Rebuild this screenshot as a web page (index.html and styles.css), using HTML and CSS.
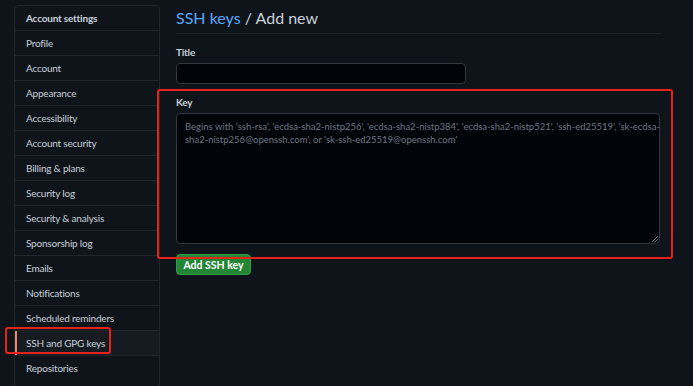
FILE: index.html
```html
<!DOCTYPE html>
<html>
<head>
<meta charset="utf-8">
<link rel="stylesheet" href="styles.css">
</head>
<body>
<div class="page">
  <nav class="sidebar">
    <div class="nav-head">Account settings</div>
    <div class="nav-item">Profile</div>
    <div class="nav-item">Account</div>
    <div class="nav-item">Appearance</div>
    <div class="nav-item">Accessibility</div>
    <div class="nav-item">Account security</div>
    <div class="nav-item">Billing &amp; plans</div>
    <div class="nav-item">Security log</div>
    <div class="nav-item">Security &amp; analysis</div>
    <div class="nav-item">Sponsorship log</div>
    <div class="nav-item">Emails</div>
    <div class="nav-item">Notifications</div>
    <div class="nav-item">Scheduled reminders</div>
    <div class="nav-item selected">SSH and GPG keys<span class="mark mark-nav"></span></div>
    <div class="nav-item">Repositories</div>
  </nav>
  <main class="main">
    <h1 class="title"><span class="link">SSH keys</span> / Add new</h1>
    <div class="field">
      <label class="label">Title</label>
      <div class="input"></div>
    </div>
    <div class="field key-field">
      <span class="mark mark-key"></span>
      <label class="label">Key</label>
      <div class="textarea"><span class="ph">Begins with 'ssh-rsa', 'ecdsa-sha2-nistp256', 'ecdsa-sha2-nistp384', 'ecdsa-sha2-nistp521', 'ssh-ed25519', 'sk-ecdsa-</span><span class="ph">sha2-nistp256@openssh.com', or 'sk-ssh-ed25519@openssh.com'</span><svg class="grip" width="6" height="6" viewBox="0 0 6 6"><path d="M6 0L0 6M6 3L3 6" stroke="#6e7681" stroke-width="1"/></svg></div>
    </div>
    <button class="btn">Add SSH key</button>
  </main>
</div>
</body>
</html>
```

FILE: styles.css
```css
html, body {
  margin: 0;
  padding: 0;
  background: #0f131a;
  width: 693px;
  height: 386px;
  overflow: hidden;
}
body {
  font-family: "Lato", "Noto Sans", sans-serif;
  font-size: 10px;
  letter-spacing: -0.2px;
  color: #c9d1d9;
}
.page {
  display: flex;
  align-items: flex-start;
  padding-top: 5px;
}
.sidebar {
  margin-left: 14px;
  width: 144px;
  border: 1px solid #21262d;
  border-radius: 5px;
  height: 400px;
}
.nav-head, .nav-item {
  height: 24px;
  line-height: 24px;
  padding-left: 11px;
  border-top: 1px solid #21262d;
  position: relative;
  white-space: nowrap;
}
.nav-head {
  border-top: none;
  font-weight: 700;
}
.nav-item.selected {
  background: #161b22;
  box-shadow: inset 2px 0 0 #f78166;
}
.mark {
  position: absolute;
  border: 2px solid #e5231b;
  border-radius: 3px;
  pointer-events: none;
}
.mark-nav {
  left: -10px;
  top: -4px;
  width: 102px;
  height: 23px;
}
.main {
  margin-left: 16px;
  width: 485px;
  padding-top: 1px;
}
.title {
  margin: 0;
  font-size: 16px;
  font-weight: 400;
  letter-spacing: 0;
  line-height: 24px;
  padding-bottom: 3px;
  border-bottom: 1px solid #21262d;
  color: #c9d1d9;
}
.link { color: #58a6ff; }
.field { position: relative; }
.label {
  display: block;
  font-weight: 700;
  line-height: 14px;
  margin-top: 11px;
  margin-bottom: 4px;
}
.input {
  width: 288px;
  height: 19px;
  background: #010409;
  border: 1px solid #30363d;
  border-radius: 4px;
}
.mark-key {
  left: -19px;
  top: -6px;
  width: 512px;
  height: 166px;
}
.textarea {
  position: relative;
  box-sizing: border-box;
  width: 484px;
  height: 131px;
  background: #010409;
  border: 1px solid #30363d;
  border-radius: 4px;
  padding: 6px 8px;
  color: #6e7681;
  font-size: 9.5px;
  letter-spacing: 0;
  line-height: 13px;
}
.ph {
  display: block;
  white-space: nowrap;
}
.grip {
  position: absolute;
  right: 1px;
  bottom: 1px;
}
.btn {
  display: flex;
  align-items: center;
  justify-content: center;
  margin-top: 10px;
  width: 75px;
  height: 21px;
  background: #238636;
  border: 1px solid #2ea043;
  border-radius: 4px;
  color: #ffffff;
  font-family: "Lato", "Noto Sans", sans-serif;
  font-weight: 700;
  font-size: 10.5px;
  padding: 0;
}
```
